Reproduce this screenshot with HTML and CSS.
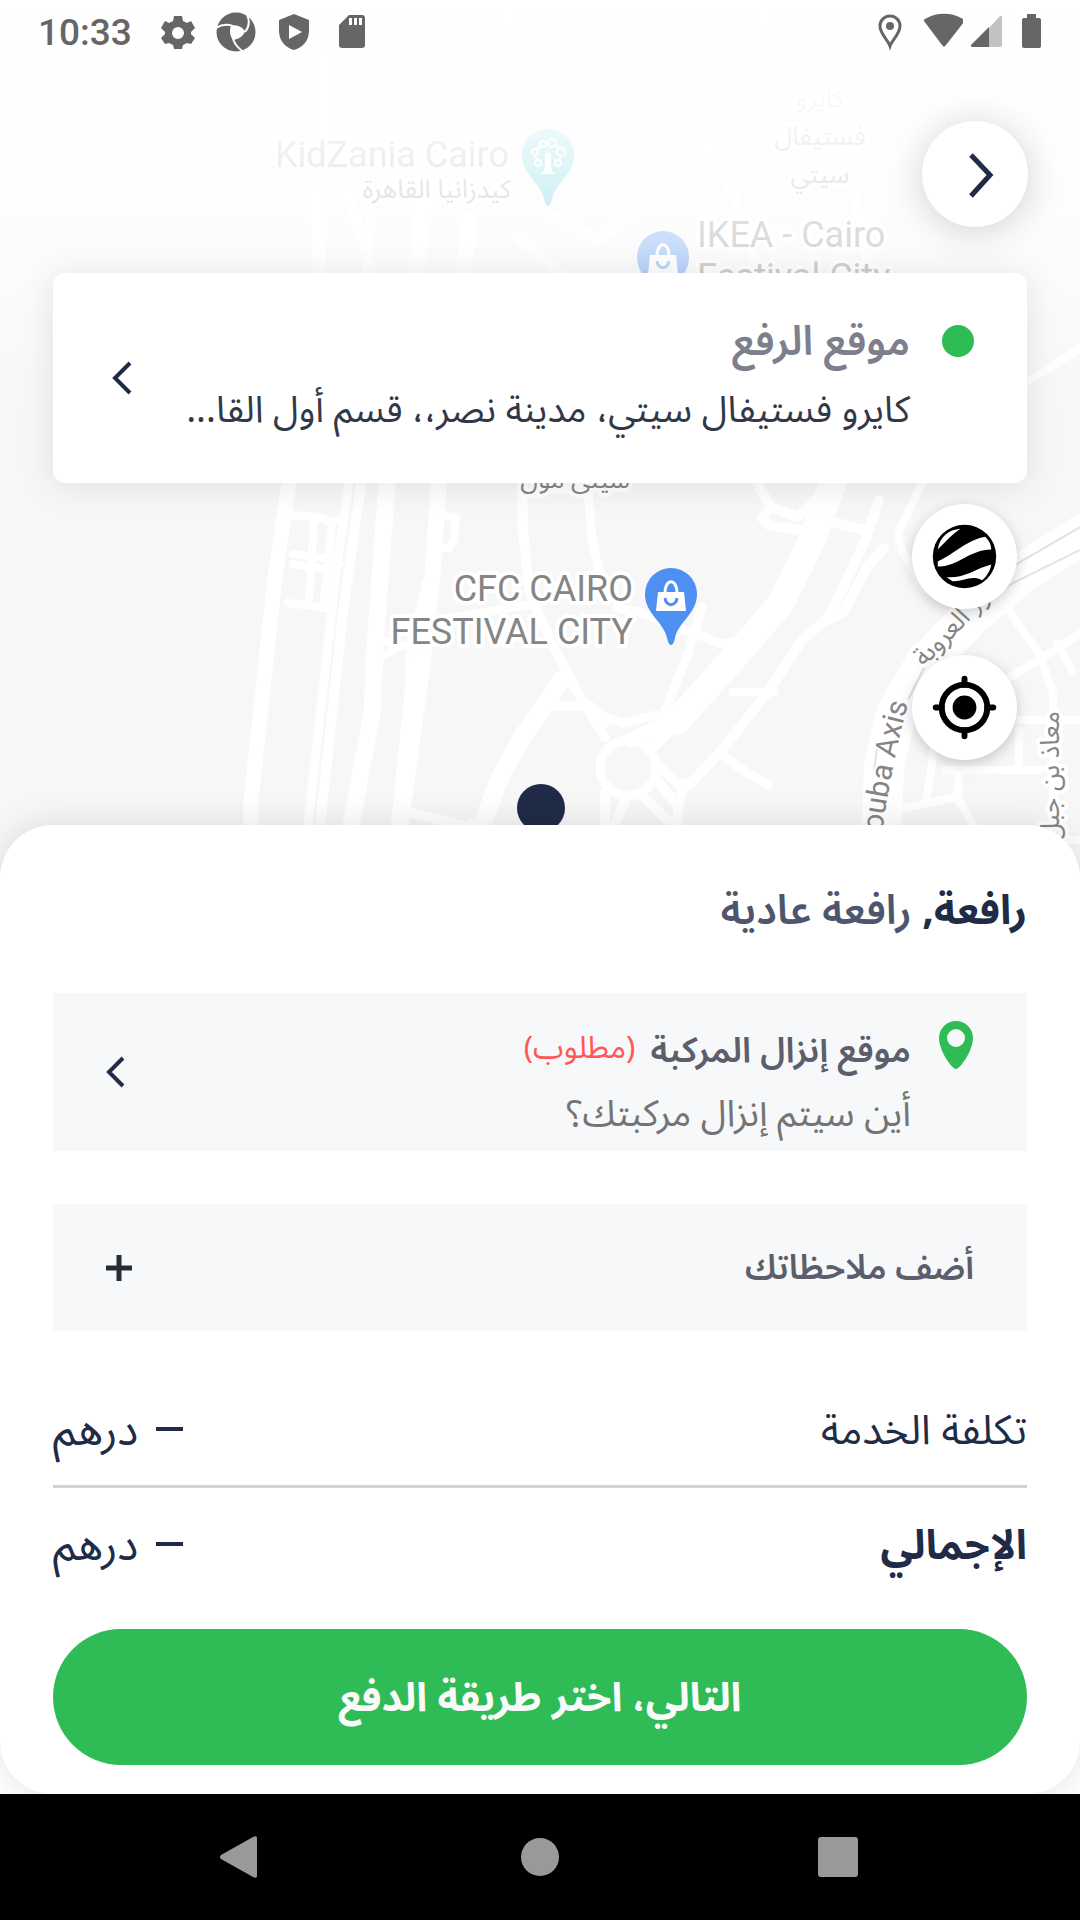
FILE: index.html
```html
<!DOCTYPE html>
<html lang="ar" dir="rtl">
<head>
<meta charset="utf-8">
<meta name="viewport" content="width=device-width, initial-scale=1">
<title>طلب رافعة</title>
<link rel="stylesheet" href="styles.css">
</head>
<body>
<div class="app">
  <main class="stage">
    <svg class="map" viewBox="0 0 1080 880" preserveAspectRatio="xMidYMin slice" aria-hidden="true">
      <defs>
        <linearGradient id="fade" x1="0" y1="0" x2="0" y2="420" gradientUnits="userSpaceOnUse">
          <stop offset="0" stop-color="#fff"/>
          <stop offset=".17" stop-color="#fff" stop-opacity=".99"/>
          <stop offset=".38" stop-color="#fff" stop-opacity=".87"/>
          <stop offset=".6" stop-color="#fff" stop-opacity=".68"/>
          <stop offset="1" stop-color="#fff" stop-opacity="0"/>
        </linearGradient>
        <g id="pin-shape">
          <path d="M0 77C-2 77-3 74-4 70C-7 54-26 46-26 26A26 26 0 0 1 26 26C26 46 7 54 4 70C3 74 2 77 0 77Z"/>
        </g>
        <g id="bag">
          <path d="M-13 24H13L15 43H-15Z" fill="#fff"/>
          <path d="M-6 25C-6 10 6 10 6 25" fill="none" stroke="#fff" stroke-width="3"/>
          <path d="M-6 30C-5 39 5 39 6 30" fill="none" stroke="#4e8ff2" stroke-width="3"/>
        </g>
        <path id="axis" d="M879 862Q886 782 913 685"/>
      </defs>
      <rect width="1080" height="880" fill="#f7f7f7"/>
      <g class="roads">
        <path stroke-width="15" d="M322 60L318 273L289 483L275 577L251 800V880"/>
        <path stroke-width="9" d="M372 200L349 483L337 563L308 825L303 880"/>
        <path stroke-width="10" d="M346 190L375 280L361 483L343 613L320 825L316 880"/>
        <path stroke-width="17" d="M425 200L387 483L375 647L372 713L351 825L342 880"/>
        <path stroke-width="16" d="M470 220L439 483L432 580L424 653L403 807L396 880"/>
        <path stroke-width="10" d="M427 583L411 647L410 687L396 825L390 880"/>
        <path stroke-width="8" d="M293 515L317 517L332 522L344 517M293 554L324 558M293 564L330 570L340 564M288 603L327 608M314 520L309 600M332 525L324 600M380 640L400 646L380 658M400 646H424"/>
        <path stroke-width="8" d="M444 515L456 518L454 540L449 548H441M437 620L529 605"/>
        <path stroke-width="10" d="M522 483L523 530L529 590L550 640L578 693L605 737"/>
        <path stroke-width="18" d="M561 680L540 712L522 737L499 780L482 825L470 870"/>
        <path stroke-width="10" d="M400 810L465 826L488 818M547 706H590L605 722"/>
        <circle cx="628" cy="768" r="28" stroke-width="9"/>
        <path stroke-width="27" d="M842 430L833 483L812 540L781 603L747 643L705 690L676 722"/>
        <path stroke-width="14" d="M676 722L650 748M668 722L630 740"/>
        <path stroke-width="10" d="M879 500L864 543L829 617L802 640L767 693L722 750L690 784H678L655 762M884 548L867 567L843 613L822 623M836 523L864 530M757 483L771 507L762 518L770 526L802 530L812 542M771 507L798 517L815 500"/>
        <path stroke-width="9" d="M733 692H774M719 753L747 773L769 785M616 608L640 612L678 627L719 643H745M702 607L688 653L664 713L623 723L595 713M588 490L592 540L599 570M540 489L588 488V483"/>
        <path stroke-width="10" d="M605 793V880M643 797L700 850M625 800L604 850M655 778L678 806V850M678 806L684 784"/>
        <path stroke-width="40" d="M1090 530L1022 573L970 617L925 664L896 713L884 767L880 880"/>
        <path stroke-width="8" d="M1027 382L1080 348M922 483L898 533L902 550L925 590M1008 610L1039 653L1053 693V830M1010 677L1090 628M1057 643L1072 670M1010 720H1090M946 770H1040M958 770V800L977 830M934 750L926 803M905 808L957 797M1019 730V770M1060 840H1080"/>
        <path stroke-width="10" d="M555 215L600 240L700 150L790 110M850 170L870 273M710 150L735 200L760 273M520 240L560 273"/>
      </g>
      <g fill="none" stroke="#e3e3e3" stroke-width="2">
        <path d="M1080 527L1010 568M1080 550L1005 587M926 664L908 700M878 742L874 770"/>
      </g>
      <g class="labels latin">
        <text x="509" y="167" text-anchor="end">KidZania Cairo</text>
        <text x="697" y="247">IKEA - Cairo</text>
        <text x="697" y="289">Festival City</text>
        <text x="716" y="76">FESTIVAL CITY</text>
        <text x="633" y="601" text-anchor="end">CFC CAIRO</text>
        <text x="633" y="644" text-anchor="end">FESTIVAL CITY</text>
        <text class="street"><textPath href="#axis">Orouba Axis</textPath></text>
      </g>
      <g class="labels arabic">
        <text x="511" y="198">كيدزانيا القاهرة</text>
        <text x="820" y="107" text-anchor="middle">كايرو</text>
        <text x="820" y="145" text-anchor="middle">فستيفال</text>
        <text x="820" y="183" text-anchor="middle">سيتي</text>
        <text x="630" y="488">سيتى مول</text>
        <text text-anchor="middle" transform="translate(968 622) rotate(-46)">محور العروبة</text>
        <text text-anchor="middle" transform="translate(1059 776) rotate(-90)">معاذ بن جبل</text>
      </g>
      <g transform="translate(671 568)"><use href="#pin-shape" fill="#4e8ff2"/><use href="#bag"/></g>
      <g transform="translate(663 231)"><use href="#pin-shape" fill="#4e8ff2"/><use href="#bag"/></g>
      <g transform="translate(548 129)">
        <use href="#pin-shape" fill="#1fbdcf"/>
        <path d="M-8 45C-3 43-3 40-3 26C-3 23 3 23 3 26C3 40 3 43 8 45Z" fill="#fff"/>
        <g fill="none" stroke="#fff" stroke-width="2"><path d="M-11 31L-13 26M-11 20L-7 17M-2 15H0M8 16L11 19M13 27L11 31"/><circle cx="-10" cy="34" r="3"/><circle cx="-13" cy="23" r="3"/><circle cx="-5" cy="15" r="3"/><circle cx="4" cy="14" r="4"/><circle cx="13" cy="23" r="4"/><circle cx="10" cy="34" r="3"/></g>
      </g>
      <circle cx="541" cy="808" r="24" fill="#202b47"/>
      <rect width="1080" height="420" fill="url(#fade)"/>
    </svg>

    <header class="status" dir="ltr">
      <span class="clock">10:33</span>
      <span class="status-group">
        <svg class="status-icon" viewBox="0 0 40 40"><path fill="currentColor" fill-rule="evenodd" d="M16 4H24L25 9L29 11L33 9L37 16L33 20L33 22L37 26L33 32L29 31L25 33L24 37H16L15 33L11 31L7 32L3 26L7 22V20L3 16L7 9L11 11L15 9ZM20 15A6 6 0 1 0 20 27A6 6 0 1 0 20 15Z"/></svg>
        <svg class="status-icon" viewBox="0 0 40 40"><circle cx="20" cy="20" r="19.500" fill="currentColor"/><path fill="#fff" d="M15 14C20 12 25 14 29 19C28 23 24 27 17 28C14 24 13 19 15 14Z"/><path fill="none" stroke="#fff" stroke-width="2" d="M0 16C6 12 11 12 17 14M29 20C33 15 34 9 31 3M17 27C19 33 23 37 28 40"/></svg>
        <svg class="status-icon" viewBox="0 0 40 40"><path fill="currentColor" fill-rule="evenodd" d="M20 2L35 8V19C35 29 28 36 20 38C12 36 5 29 5 19V8ZM15 13V27L28 20Z"/></svg>
        <svg class="status-icon" viewBox="0 0 40 40"><path fill="currentColor" fill-rule="evenodd" d="M17 3H30Q33 3 33 6V33Q33 36 30 36H10Q7 36 7 33V13ZM17 6V13H20V6ZM22 6V13H25V6ZM27 6V13H30V6Z"/></svg>
      </span>
      <span class="status-group status-end">
        <svg class="status-icon icon-place" viewBox="0 0 40 40"><path fill="none" stroke="currentColor" stroke-width="3" d="M20 34C18 28 10 22 10 14A10 10 0 0 1 30 14C30 22 22 28 20 34Z"/><circle cx="20" cy="14" r="4" fill="currentColor"/></svg>
        <svg class="status-icon" viewBox="0 0 40 40"><path fill="currentColor" d="M1 9Q0 8 2 7C13 0 29 0 40 7Q42 8 41 10L23 33Q21 36 19 33Z"/></svg>
        <svg class="icon-signal" viewBox="0 0 32 40"><path fill="#c2c2c2" d="M32 5V33Q32 35 30 35H19V16L30 4Q32 3 32 5Z"/><path fill="currentColor" d="M19 15V35H2Q0 34 1 33Z"/></svg>
        <svg class="icon-battery" viewBox="0 0 44 40"><path fill="currentColor" d="M18 2H27V6H30Q32 6 32 8V34Q32 36 30 36H15Q13 36 13 34V8Q13 6 15 6H18Z"/></svg>
      </span>
    </header>

    <div class="toolbar">
      <button class="round back" aria-label="رجوع"><svg viewBox="0 0 106 106"><path fill="none" stroke="#202b47" stroke-width="5" d="M49 34L68 54L49 75"/></svg></button>
    </div>

    <button class="card pickup">
      <span class="dot"></span>
      <span class="lines">
        <span class="card-title">موقع الرفع</span>
        <span class="card-address">كايرو فستيفال سيتي، مدينة نصر،، قسم أول القا...</span>
      </span>
      <svg class="chevron" viewBox="0 0 26 34"><path fill="none" stroke="#202b47" stroke-width="4" d="M24 2L9 17L24 32"/></svg>
    </button>

    <div class="map-tools">
      <button class="round" aria-label="نوع الخريطة"><svg viewBox="0 0 106 106">
        <circle cx="53" cy="53" r="32" fill="#000"/>
        <g fill="#fff"><path d="M26 46C28 33 37 26 49 25C41 30 34 38 26 46Z"/><path d="M26 58C45 49 54 37 74 33C78 37 80 41 80 46C58 46 46 64 26 63Z"/><path d="M35 74C54 75 64 65 80 61C79 68 75 73 71 77C60 71 50 79 41 78Z"/></g>
      </svg></button>
      <button class="round" aria-label="موقعي الحالي"><svg viewBox="0 0 106 106">
        <circle cx="53" cy="53" r="12" fill="#000"/><circle cx="53" cy="53" r="23" fill="none" stroke="#000" stroke-width="6"/><path d="M53 24V30M53 76V82M24 53H30M76 53H82" stroke="#000" stroke-width="6" stroke-linecap="round"/>
      </svg></button>
    </div>
  </main>

  <section class="sheet">
    <h1 class="service">رافعة, <span class="service-kind">رافعة عادية</span></h1>

    <button class="field dropoff">
      <svg class="pin" viewBox="0 0 36 50"><path fill="#2fbc56" fill-rule="evenodd" d="M18 49C14 49 1 31 1 18A17 17 0 0 1 35 18C35 31 22 49 18 49ZM18 9A9 9 0 1 0 18 27A9 9 0 1 0 18 9Z"/></svg>
      <span class="lines">
        <span class="field-label">موقع إنزال المركبة <span class="required">(مطلوب)</span></span>
        <span class="field-hint">أين سيتم إنزال مركبتك؟</span>
      </span>
      <svg class="chevron" viewBox="0 0 26 34"><path fill="none" stroke="#202b47" stroke-width="4" d="M17 3L3 17L17 31"/></svg>
    </button>

    <button class="field notes">
      <span class="field-label">أضف ملاحظاتك</span>
      <svg class="plus" viewBox="0 0 26 26"><path stroke="#272b38" stroke-width="5" d="M13 0V26M0 13H26"/></svg>
    </button>

    <dl class="costs">
      <div class="cost">
        <dt>تكلفة الخدمة</dt>
        <dd><span class="dash"></span>درهم</dd>
      </div>
      <div class="cost total">
        <dt>الإجمالي</dt>
        <dd><span class="dash"></span>درهم</dd>
      </div>
    </dl>

    <button class="next">التالي، اختر طريقة الدفع</button>
  </section>

  <nav class="navbar" dir="ltr">
    <button aria-label="رجوع"><svg viewBox="0 0 44 44"><path fill="#999" d="M2 24Q0 22 2 20L34 2Q38 0 38 3V41Q38 44 34 42Z"/></svg></button>
    <button aria-label="الرئيسية"><svg viewBox="0 0 44 44"><circle cx="22" cy="22" r="19" fill="#999"/></svg></button>
    <button aria-label="التطبيقات"><svg viewBox="0 0 44 44"><rect x="1" y="2" width="40" height="40" rx="3" fill="#999"/></svg></button>
  </nav>
</div>
</body>
</html>
```
FILE: styles.css
```css
* { box-sizing: border-box; }

body {
  margin: 0;
  background: #fff;
  color: #202b47;
  font-family: "Noto Sans Arabic", "DejaVu Sans", sans-serif;
}

button {
  margin: 0;
  padding: 0;
  border: 0;
  background: none;
  color: inherit;
  font: inherit;
  cursor: pointer;
}

svg { display: block; }

.app {
  min-height: 100vh;
  display: flex;
  flex-direction: column;
}

/* Map and the controls over it */
.stage {
  position: relative;
  flex: 1;
  padding-bottom: 65px;
}

.map {
  position: absolute;
  top: 0;
  left: 0;
  width: 100%;
  height: calc(100% + 55px);
}

.roads { fill: none; stroke: #fff; stroke-linecap: round; stroke-linejoin: round; }

.labels {
  fill: #858585;
  stroke: #fff;
  stroke-width: 8px;
  stroke-linejoin: round;
  paint-order: stroke;
}
.latin { font: 36px Roboto, sans-serif; direction: ltr; }
.latin .street { font-size: 30px; stroke-width: 4px; }
.arabic { font-size: 26px; direction: rtl; }

.status {
  position: relative;
  display: flex;
  align-items: center;
  height: 63px;
  padding: 0 27px 0 38px;
  color: #666;
}
.clock { font: 500 37px/64px Roboto, sans-serif; margin-right: 26px; padding-top: 3px; }
.status-group { display: flex; gap: 18px; }
.status-end { gap: 7px; margin-left: auto; }
.status-icon { width: 40px; height: 40px; }
.icon-place { width: 52px; }
.icon-signal { width: 32px; height: 40px; }
.icon-battery { width: 44px; height: 40px; }

.toolbar {
  position: relative;
  display: flex;
  padding: 58px 52px 46px;
}

.round {
  width: 105px;
  height: 105px;
  border-radius: 50%;
  background: #fff;
  box-shadow: 0 4px 14px rgba(0, 0, 0, .2);
}
.back {
  width: 106px;
  height: 106px;
  box-shadow: 0 4px 36px rgba(32, 36, 50, .2);
}

.card {
  position: relative;
  display: flex;
  width: calc(100% - 106px);
  min-height: 210px;
  margin: 0 53px;
  padding: 37px 53px;
  border-radius: 12px;
  background: #fff;
  box-shadow: 0 2px 36px rgba(0, 0, 0, .1);
  text-align: start;
}
.dot {
  flex: none;
  width: 32px;
  height: 32px;
  margin: 15px 0 0 32px;
  border-radius: 50%;
  background: #2fbc56;
}
.lines { flex: 1; min-width: 0; display: flex; flex-direction: column; }
.card-title { font-size: 41px; font-weight: 600; line-height: 64px; color: #7d808c; }
.card-address { font-size: 37px; line-height: 72px; color: #333848; white-space: nowrap; }
.chevron { flex: none; align-self: center; width: 26px; height: 34px; }

.map-tools {
  position: relative;
  display: flex;
  flex-direction: column;
  gap: 46px;
  padding: 21px 63px 0;
}

/* Order sheet */
.sheet {
  position: relative;
  display: flex;
  flex-direction: column;
  padding: 54px 53px 29px;
  border-radius: 53px;
  background: #fff;
  box-shadow: 0 0 36px rgba(0, 0, 0, .12);
}
.service { margin: 0 0 50px; font-size: 41px; line-height: 64px; font-weight: 700; }
.service-kind { color: #4e566e; font-weight: 600; }

.field {
  display: flex;
  width: 100%;
  margin-bottom: 53px;
  padding: 0 53px;
  background: #f7f8fa;
  text-align: start;
}
.field-label { font-size: 34px; font-weight: 600; line-height: 62px; color: #5c5e6b; }
.field-hint { font-size: 37px; line-height: 64px; color: #747474; }
.required { margin-right: 6px; font-size: 31px; line-height: 1; vertical-align: 4px; font-weight: 400; color: #ff5757; }
.dropoff { min-height: 158px; padding-top: 27px; }
.dropoff .field-label { font-size: 35px; }
.dropoff .lines { margin-right: 27px; }
.dropoff .chevron { margin-bottom: 28px; }
.pin { flex: none; width: 36px; height: 50px; }
.notes { align-items: center; justify-content: space-between; min-height: 127px; }
.plus { width: 26px; height: 26px; }

.costs { margin: 0; font-size: 41px; }
.cost { display: flex; justify-content: space-between; line-height: 50px; padding: 22px 0 29px; border-bottom: 3px solid #d3d3d3; }
.total { padding: 33px 0 58px; border-bottom: 0; }
.total dt { font-weight: 700; }
.cost dd { display: flex; margin: 0; font-size: 44px; }
.dash { width: 27px; height: 4px; margin: 21px 0 0 18px; background: currentColor; }

.next {
  min-height: 136px;
  padding-top: 3px;
  border-radius: 68px;
  background: #2fbc56;
  color: #fafafa;
  font-size: 40px;
  font-weight: 700;
}

/* System navigation */
.navbar {
  display: flex;
  justify-content: center;
  gap: 255px;
  height: 126px;
  background: #000;
}
.navbar button { width: 44px; }
.navbar svg { width: 44px; height: 44px; }
```
